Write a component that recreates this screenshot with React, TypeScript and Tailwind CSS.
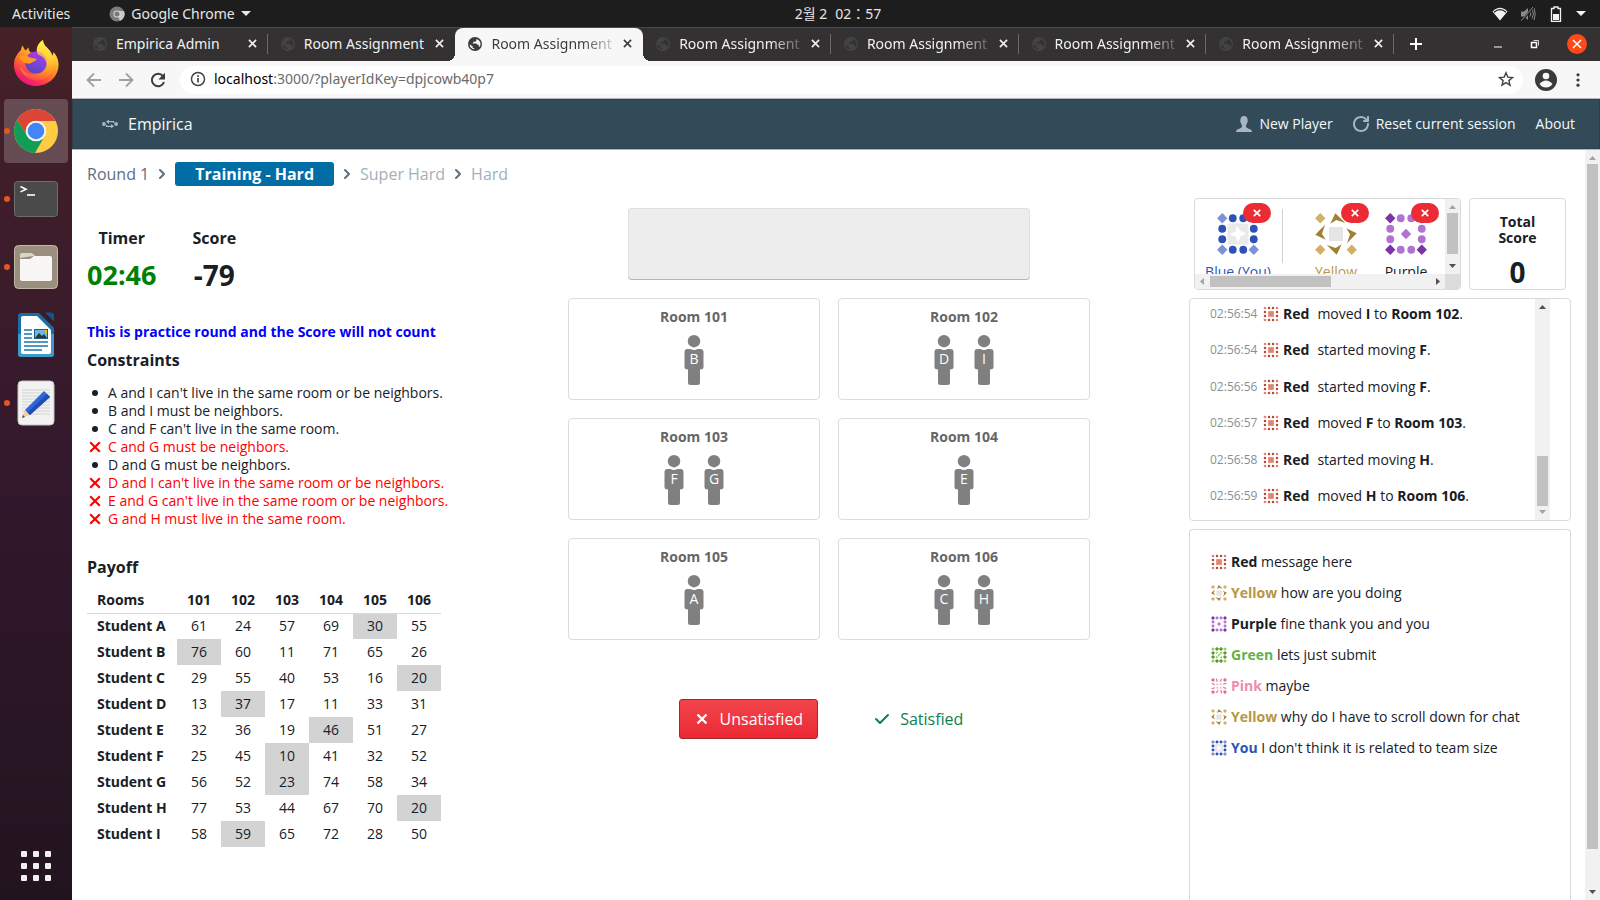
import type { ReactNode } from "react";

const UI = "font-['Noto_Sans','Noto_Sans_CJK_KR',sans-serif]";

/* ---------- small icons ---------- */

function Cross({ className = "", width = 2 }: { className?: string; width?: number }) {
  return (
    <svg viewBox="0 0 10 10" className={className} fill="none" stroke="currentColor" strokeWidth={width} aria-hidden="true">
      <path d="M1 1L9 9M9 1L1 9" />
    </svg>
  );
}

function Chevron() {
  return (
    <svg viewBox="0 0 16 16" className="size-4 shrink-0 text-[#5c7080]" fill="none" stroke="currentColor" strokeWidth="2" strokeLinecap="round" strokeLinejoin="round" aria-hidden="true">
      <path d="M6 4l4 4-4 4" />
    </svg>
  );
}

function Globe({ className = "" }: { className?: string }) {
  return (
    <svg viewBox="0 0 16 16" className={className} aria-hidden="true">
      <path
        fill="currentColor"
        fillRule="evenodd"
        d="M8 1a7 7 0 1 0 0 14A7 7 0 0 0 8 1zM2.6 8.3l3.1 2.2v1.6h1.5v1.2A5.4 5.4 0 0 1 2.6 8.3zM9.5 3v1.2L8.300 5.700H6.500L5.700 7.500h3.700l1.100 1.300h1.300v1.600l1 .4A5.400 5.400 0 0 0 9.500 3z"
      />
    </svg>
  );
}

function ArrowHead({ dir, tone = "dark" }: { dir: "up" | "down" | "left" | "right"; tone?: "dark" | "light" }) {
  const d = {
    up: "M0 4L3.500 0L7 4z",
    down: "M0 0h7L3.500 4z",
    left: "M4 0v7L0 3.500z",
    right: "M0 0v7L4 3.500z",
  }[dir];
  const horizontal = dir === "left" || dir === "right";
  return (
    <svg
      viewBox={horizontal ? "0 0 4 7" : "0 0 7 4"}
      className={horizontal ? "h-[7px] w-1" : "h-1 w-[7px]"}
      fill={tone === "dark" ? "#505050" : "#a3a3a3"}
      aria-hidden="true"
    >
      <path d={d} />
    </svg>
  );
}

/* ---------- identicons (4 x 4 cells in a 42-unit box) ---------- */

type Team = "Blue" | "Yellow" | "Purple" | "Red" | "Green" | "Pink";

const CORNERS = [[5.25, 5.25], [36.75, 5.25], [5.25, 36.75], [36.75, 36.75]];
const SIDES = [
  [15.75, 5.25], [26.25, 5.25], [15.75, 36.75], [26.25, 36.75],
  [5.25, 15.75], [5.25, 26.25], [36.75, 15.75], [36.75, 26.25],
];

const Diamond = ({ x, y, r, fill }: { x: number; y: number; r: number; fill: string }) => (
  <path d={`M${x} ${y - r}L${x + r} ${y}L${x} ${y + r}L${x - r} ${y}z`} fill={fill} />
);

function Identicon({ team, className = "" }: { team: Team; className?: string }) {
  return (
    <svg viewBox="0 0 42 42" className={className} role="img" aria-label={team}>
      {team === "Blue" && (
        <>
          {CORNERS.map(([x, y]) => <Diamond key={`${x}${y}`} x={x} y={y} r={5.2} fill="#7c93d6" />)}
          {SIDES.map(([x, y]) => <circle key={`${x}${y}`} cx={x} cy={y} r="3.900" fill="#2c52b8" />)}
          <rect x="10.500" y="10.500" width="21" height="21" fill="#eaeaea" />
          <path d="M19.500 12.500L23.500 18L29.500 20.500L23.500 23.500L21 29.500L18.500 23.500L12.500 21.500L18.500 18.500z" fill="#fff" />
        </>
      )}
      {team === "Yellow" && (
        <>
          {CORNERS.map(([x, y]) => <Diamond key={`${x}${y}`} x={x} y={y} r={5.2} fill="#d3b066" />)}
          {[0, 90, 180, 270].map((a) => (
            <path key={a} d="M31.300 15.300L41.700 20.300L32 30.300L35 21.300z" fill="#a17f33" transform={`rotate(${a} 21 21)`} />
          ))}
          <rect x="14" y="14" width="14" height="14" fill="#e5e5e5" />
        </>
      )}
      {team === "Purple" && (
        <>
          {CORNERS.map(([x, y]) => <Diamond key={`${x}${y}`} x={x} y={y} r={5.2} fill="#7a34a6" />)}
          {SIDES.map(([x, y]) => <circle key={`${x}${y}`} cx={x} cy={y} r="3.900" fill="#b073d4" />)}
          <Diamond x={21} y={21} r={5.2} fill="#b073d4" />
        </>
      )}
      {team === "Red" && (
        <>
          {CORNERS.map(([x, y]) => <circle key={`${x}${y}`} cx={x} cy={y} r="3.600" fill="#df8574" />)}
          {SIDES.map(([x, y]) => <circle key={`${x}${y}`} cx={x} cy={y} r="3.200" fill="#b84a35" />)}
          <rect x="13.500" y="13.500" width="15" height="15" fill="#df8574" />
        </>
      )}
      {team === "Green" && (
        <>
          {CORNERS.map(([x, y]) => <circle key={`${x}${y}`} cx={x} cy={y} r="4" fill="#93cf62" />)}
          {SIDES.map(([x, y]) => <Diamond key={`${x}${y}`} x={x} y={y} r={5.500} fill="#5d9a31" />)}
          <path d="M12 12l7 2-5 5zM30 12l-2 7-5-5zM12 30l2-7 5 5zM30 30l-7-2 5-5z" fill="#93cf62" />
          <path d="M17 25l8-8" stroke="#93cf62" strokeWidth="3" />
        </>
      )}
      {team === "Pink" && (
        <>
          {CORNERS.map(([x, y]) => <Diamond key={`${x}${y}`} x={x} y={y} r={5.500} fill="#df6f99" />)}
          {[0, 90, 180, 270].map((a) => (
            <path key={a} d="M13 1l3 1 2 8-4-1zM30 1l-5 3-3 7 4-2z" fill="#df6f99" transform={`rotate(${a} 21 21)`} />
          ))}
          <path d="M14 14h5v5h-5zM23 14h5v5h-5zM14 23h5v5h-5zM23 23h5v5h-5z" fill="#f3b9cd" />
        </>
      )}
    </svg>
  );
}

/* ---------- desktop: top bar and dock ---------- */

function TopBar() {
  return (
    <header className={`grid h-[27px] shrink-0 grid-cols-[1fr_auto_1fr] items-center bg-[#1d1d1d] text-sm leading-5 text-[#e6e6e6] ${UI}`}>
      <div className="flex items-center">
        <button className="pl-3">Activities</button>
        <button className="ml-[39px] flex items-center">
          <svg viewBox="0 0 16 16" className="size-4" aria-hidden="true">
            <circle cx="8" cy="8" r="7.500" fill="#7d7d7d" />
            <path d="M8 8L11 15A7.500 7.500 0 0 0 15 5H8z" fill="#c9c9c9" />
            <circle cx="8" cy="8" r="3.500" fill="#d8d8d8" />
            <circle cx="8" cy="8" r="2.500" fill="#777" />
          </svg>
          <span className="ml-1.5">Google Chrome</span>
          <svg viewBox="0 0 10 5" className="ml-1.5 h-[5px] w-2.5 fill-current" aria-hidden="true"><path d="M0 0h10L5 5z" /></svg>
        </button>
      </div>
      <button className="pl-[76px]">
        <span>2월 2</span>
        <span className="ml-2">02：57</span>
      </button>
      <div className="flex items-center justify-end gap-3 pr-[14px]">
        <svg viewBox="0 0 16 14" className="h-3.5 w-4" aria-label="Wi-Fi">
          <path d="M.5 4.500Q8-3 15.500 4.500L8 13.500z" fill="#f2f2f2" />
          <path d="M2 5.200Q8 .2 14 5.200" fill="none" stroke="#1d1d1d" strokeWidth="1.200" />
        </svg>
        <svg viewBox="0 0 16 16" className="size-4" fill="none" stroke="#8a8a8a" aria-label="Muted">
          <path d="M1 5.500h3l4-3.500v12l-4-3.500H1z" fill="#8a8a8a" stroke="none" />
          <path d="M10 5.500q1.500 2.500 0 5M12 3.500q3 4.500 0 9M14 2q2.500 6 0 12" />
          <path d="M2 14.500L13.500 1" stroke="#1d1d1d" strokeWidth="2" />
          <path d="M1.500 14.500L13 1" />
        </svg>
        <svg viewBox="0 0 16 16" className="size-4" aria-label="Battery">
          <path d="M6 1h4v1.500h2.500v13h-9v-13H6z" fill="none" stroke="#f2f2f2" strokeWidth="1.300" />
          <rect x="5" y="8" width="6" height="6" fill="#f2f2f2" />
        </svg>
        <svg viewBox="0 0 10 5" className="h-[5px] w-2.5 fill-[#f2f2f2]" aria-hidden="true"><path d="M0 0h10L5 5z" /></svg>
      </div>
    </header>
  );
}

function Firefox() {
  return (
    <svg viewBox="0 0 46 48" className="h-12 w-[46px]" aria-hidden="true">
      <defs>
        <linearGradient id="ffBody" x1="0.800" y1="0.100" x2="0.300" y2="1">
          <stop offset="0" stopColor="#fff44f" />
          <stop offset="0.300" stopColor="#ffb52b" />
          <stop offset="0.600" stopColor="#ff6a2c" />
          <stop offset="0.850" stopColor="#f8265f" />
          <stop offset="1" stopColor="#e31587" />
        </linearGradient>
        <linearGradient id="ffTail" x1="0.500" y1="0" x2="0.600" y2="1">
          <stop offset="0" stopColor="#fff34f" />
          <stop offset="0.500" stopColor="#ffd43a" />
          <stop offset="1" stopColor="#ff9a28" stopOpacity="0.300" />
        </linearGradient>
        <linearGradient id="ffGlobe" x1="0.700" y1="0" x2="0.300" y2="1">
          <stop offset="0" stopColor="#b833e1" />
          <stop offset="0.500" stopColor="#7a45e0" />
          <stop offset="1" stopColor="#5b44b5" />
        </linearGradient>
      </defs>
      <path d="M1 26C1 19 4 15 8 11C8 9 9 7 10 6.500C10.300 9 11.500 10.500 13 11.500C13.700 10 14.500 9 15.500 8.500C15.500 11 16.500 12.500 18 13.500H24C23 8 26 3 30 1C30 6 34 8 37 12C38.500 14 39 15.500 39 17C40 16 40.500 14.500 40.500 13C44 17 46 22 45.500 27C45 38 35 47 23 47S1 38 1 26z" fill="url(#ffBody)" />
      <circle cx="23" cy="23.500" r="11" fill="url(#ffGlobe)" />
      <path fillRule="evenodd" d="M30 1C30 6 34 8 37 12C41 17 42.500 24 39.500 31C36 39 28 43 20 41C13 39 8 34 7 27C10 33 16 36 22 35.500C30 35 34.500 29 33 23C32 19.500 29 17 25 15.500C22 11 25 4 30 1z" fill="url(#ffTail)" opacity="0.700" />
      <path d="M6 18C10 15.500 14 16.500 17 18.500C19 19.300 22 19 23.500 20C23 22.500 19 23 17.500 24.500C13 25 8.500 23 6 18z" fill="#ff9a1f" />
    </svg>
  );
}

function ChromeLogo() {
  return (
    <svg viewBox="0 0 46 46" className="size-[46px]" aria-hidden="true">
      <circle cx="23" cy="23" r="22" fill="#fc4" />
      <path d="M23 13H42.600A22 22 0 0 0 4 12L14.300 28A10 10 0 0 1 23 13z" fill="#db4437" />
      <path d="M4 12A22 22 0 0 0 22 45L31.700 28A10 10 0 0 1 14.300 28z" fill="#0f9d58" />
      <circle cx="23" cy="23" r="10.300" fill="#f4f4f4" />
      <circle cx="23" cy="23" r="8.300" fill="#4285f4" />
    </svg>
  );
}

function DockItem({ label, running, active, children }: { label: string; running?: boolean; active?: boolean; children: ReactNode }) {
  return (
    <li className="relative flex w-full justify-center">
      {running && <span className="absolute top-[29px] left-1 size-1.5 rounded-full bg-[#e95420]" />}
      <button aria-label={label} className={active ? "flex size-16 items-center justify-center rounded bg-white/20" : "flex size-16 items-center justify-center rounded"}>
        {children}
      </button>
    </li>
  );
}

function Dock() {
  return (
    <nav aria-label="Dock" className="flex w-[72px] shrink-0 flex-col justify-between bg-linear-to-b from-[#462127] via-[#33182c] to-[#22141f] pt-1 pb-4">
      <ul className="flex flex-col gap-1">
        <DockItem label="Firefox"><Firefox /></DockItem>
        <DockItem label="Google Chrome" running active><ChromeLogo /></DockItem>
        <DockItem label="Terminal" running>
          <svg viewBox="0 0 46 46" className="size-[46px]" aria-hidden="true">
            <rect x="1.500" y="5.500" width="43" height="35" rx="3" fill="#4a4a4a" stroke="#6d6d6d" />
            <path d="M7.500 10.500l5.500 2.700-5.500 2.700" fill="none" stroke="#fff" strokeWidth="1.600" />
            <path d="M14 19h8" stroke="#fff" strokeWidth="1.600" />
          </svg>
        </DockItem>
        <DockItem label="Files" running>
          <svg viewBox="0 0 46 46" className="size-[46px]" aria-hidden="true">
            <rect x="1.500" y="1.500" width="43" height="43" rx="4" fill="#9a8f7e" stroke="#c0b8a8" />
            <path d="M7 14v-3q0-2 2-2h9q2 0 4 3h-2z" fill="#d9d5c9" />
            <path d="M7 15h10l4-3h16q2 0 2 2v21q0 2-2 2H9q-2 0-2-2z" fill="#f8f7f5" />
          </svg>
        </DockItem>
        <DockItem label="LibreOffice Writer">
          <svg viewBox="0 0 46 46" className="size-[46px]" aria-hidden="true">
            <path d="M8 1h18l15 15v26q0 3-3 3H8q-3 0-3-3V4q0-3 3-3z" fill="#1a6ea5" />
            <path d="M5 22h36v20q0 3-3 3H8q-3 0-3-3z" fill="#3d9bc9" />
            <path d="M32 .5h6q3 0 3 3v6z" fill="#11578b" />
            <path d="M10 4h14l14 14v22q0 2-2 2H10q-2 0-2-2V6q0-2 2-2z" fill="#fff" />
            <path d="M11 18h8M11 22h8M11 26h8M11 30h24M11 34h24M11 38h18" stroke="#1c76ad" strokeWidth="1.700" />
            <rect x="21.500" y="17.500" width="13" height="9" fill="#6cb8e0" stroke="#1a5f8e" />
            <path d="M22 26l4-5 3 3 2-2 3 4z" fill="#333" />
            <path d="M31 18h3v4z" fill="#f4c20d" />
          </svg>
        </DockItem>
        <DockItem label="Text Editor" running>
          <svg viewBox="0 0 46 46" className="size-[46px]" aria-hidden="true">
            <rect x="5" y="1" width="36" height="44" rx="4" fill="#f2f2f2" stroke="#c4c4c4" />
            <path d="M9 10h28M9 13h28M9 16h28M9 19h28M9 22h28M9 25h28M9 28h28M9 31h28M9 34h28" stroke="#d3d3d3" strokeWidth="1" />
            <path d="M9 38l3-8 5 5z" fill="#f5cfa6" />
            <path d="M9 38l1-3 2 2z" fill="#444" />
            <path d="M12 30L31 11l6 6-20 18z" fill="#2f66dd" />
            <path d="M14.500 32.500L34 14l3 3-20 18z" fill="#1f4fb5" />
          </svg>
        </DockItem>
      </ul>
      <button aria-label="Show applications" className="mx-auto grid size-9 grid-cols-3 place-items-center">
        {Array.from({ length: 9 }, (_, i) => <span key={i} className="size-1.5 rounded-[1px] bg-[#f1efee]" />)}
      </button>
    </nav>
  );
}

/* ---------- browser chrome ---------- */

const TABS = ["Empirica Admin", ...Array.from({ length: 6 }, () => "Room Assignment")];

function TabStrip() {
  return (
    <div className={`flex h-[34px] border-t border-[#484848] bg-[#333132] pl-2 text-sm leading-5 ${UI}`}>
      <div role="tablist" className="flex min-w-0 flex-1">
        {TABS.map((title, i) => {
          const active = i === 2;
          const divider = i !== 1 && i !== 2;
          return (
            <div
              key={i}
              className={
                active
                  ? "relative flex min-w-0 flex-1 items-center rounded-t-lg bg-[#f7f7f7] pb-0.5 pl-3 text-[#3c3c3c] before:absolute before:bottom-0 before:-left-2 before:size-2 before:bg-[radial-gradient(circle_at_0_0,transparent_8px,#f7f7f7_8px)] after:absolute after:-right-2 after:bottom-0 after:size-2 after:bg-[radial-gradient(circle_at_100%_0,transparent_8px,#f7f7f7_8px)]"
                  : "flex min-w-0 flex-1 items-center pb-0.5 pl-3 text-[#f1f1f1]"
              }
            >
              <Globe className={active ? "size-4 shrink-0" : "size-4 shrink-0 text-[#434343]"} />
              <button
                role="tab"
                aria-selected={active}
                className={
                  i < 2
                    ? "ml-2 min-w-0 flex-1 overflow-hidden text-left whitespace-nowrap"
                    : "ml-2 min-w-0 flex-1 overflow-hidden text-left whitespace-nowrap [mask-image:linear-gradient(to_right,black_70%,transparent)]"
                }
              >
                {title}
              </button>
              <button aria-label={`Close ${title}`} className="mr-2 p-0.5">
                <Cross className="size-[9px]" width={1.8} />
              </button>
              <span className={divider ? "h-5 w-px bg-[#6a6a6a]" : "h-5 w-px"} />
            </div>
          );
        })}
      </div>
      <div className="flex w-[206px] shrink-0 items-center pb-0.5 text-white">
        <button aria-label="New tab" className="ml-4">
          <svg viewBox="0 0 12 12" className="size-3" stroke="currentColor" strokeWidth="2"><path d="M6 0v12M0 6h12" /></svg>
        </button>
        <div className="ml-auto flex items-center gap-[27px] pr-[13px]">
          <button aria-label="Minimize">
            <svg viewBox="0 0 10 10" className="size-2.5"><path d="M1 8h8" stroke="currentColor" /></svg>
          </button>
          <button aria-label="Restore">
            <svg viewBox="0 0 10 10" className="size-2.5" fill="none" stroke="currentColor"><path d="M1.500 3.500h5v5h-5z" strokeWidth="1.500" /><path d="M3.500 1.500h5v5" strokeWidth="1" opacity="0.800" /></svg>
          </button>
          <button aria-label="Close window" className="flex size-5 items-center justify-center rounded-full bg-[#fc4a1a]">
            <Cross className="size-2.5" width={1.5} />
          </button>
        </div>
      </div>
    </div>
  );
}

function Toolbar() {
  return (
    <div className={`flex h-[38px] items-center border-b border-[#b8b8b8] bg-[#f7f7f7] px-[14px] text-sm leading-5 ${UI}`}>
      <div className="flex gap-4">
        <button aria-label="Back" className="text-[#a0a0a0]">
          <svg viewBox="0 0 16 16" className="size-4" fill="none" stroke="currentColor" strokeWidth="1.800"><path d="M15 8H2M8 1.500L1.500 8L8 14.500" /></svg>
        </button>
        <button aria-label="Forward" className="text-[#a0a0a0]">
          <svg viewBox="0 0 16 16" className="size-4" fill="none" stroke="currentColor" strokeWidth="1.800"><path d="M1 8h13M8 1.500L14.500 8L8 14.500" /></svg>
        </button>
        <button aria-label="Reload" className="text-[#3a3a3a]">
          <svg viewBox="0 0 16 16" className="size-4" fill="none" stroke="currentColor" strokeWidth="2"><path d="M13 4.200A6.200 6.200 0 1 0 14 10" /><path d="M15 .8v6.700H8.300z" fill="currentColor" stroke="none" /></svg>
        </button>
      </div>
      <div className="ml-[14px] flex h-7 flex-1 items-center rounded-full bg-white pr-[9px] pb-px pl-2.5">
        <svg viewBox="0 0 16 16" className="size-4" fill="none" stroke="#444" strokeWidth="1.500" aria-hidden="true"><circle cx="8" cy="8" r="6.500" /><path d="M8 7v4.500M8 4.200v1.700" strokeWidth="1.700" /></svg>
        <label htmlFor="address" className="pl-2 text-black">localhost</label>
        <input id="address" readOnly value=":3000/?playerIdKey=dpjcowb40p7" className="min-w-0 flex-1 bg-transparent text-[#6b6b6b] outline-none" />
        <button aria-label="Bookmark this page">
          <svg viewBox="0 0 16 16" className="size-4" fill="none" stroke="#444" strokeWidth="1.400"><path d="M8 1.800l1.800 4.300 4.700.4-3.600 3.100 1.100 4.600L8 11.700l-4 2.500 1.100-4.600-3.600-3.100 4.700-.4z" /></svg>
        </button>
      </div>
      <button aria-label="Profile" className="ml-3">
        <svg viewBox="0 0 22 22" className="size-[22px]"><circle cx="11" cy="11" r="11" fill="#3a3a3a" /><circle cx="11" cy="7" r="3.300" fill="#f7f7f7" /><path d="M4.500 15q3-3.500 6.500-3.500t6.500 3.500q-2.500 3.500-6.500 3.500T4.500 15z" fill="#f7f7f7" /></svg>
      </button>
      <button aria-label="Menu" className="ml-[13px]">
        <svg viewBox="0 0 16 16" className="size-4" fill="#3a3a3a"><circle cx="8" cy="2.800" r="1.600" /><circle cx="8" cy="8" r="1.600" /><circle cx="8" cy="13.200" r="1.600" /></svg>
      </button>
    </div>
  );
}

/* ---------- page ---------- */

function Navbar() {
  return (
    <nav className="flex h-[50px] items-center bg-[#334b59] pr-[25px] pl-[30px] text-[#f5f8fa] shadow-[inset_0_0_0_1px_rgba(16,22,26,0.2)]">
      <svg viewBox="0 0 16 16" className="size-4 text-[#a7b6c2]" fill="currentColor" aria-hidden="true">
        <circle cx="1.900" cy="8" r="1.900" /><circle cx="14.100" cy="8" r="1.900" />
        <path d="M6 5.700h5.500v1.300M10 10.300H4.500v-1.300" fill="none" stroke="currentColor" strokeWidth="1.200" />
        <path d="M7 3.400v4.600L4 5.700zM9 8v4.600L12 10.300z" />
      </svg>
      <a href="#home" className="ml-2.5 text-base leading-6">Empirica</a>
      <div className="ml-auto flex items-center gap-5 text-sm leading-5">
        <a href="#new-player" className="flex items-center gap-[7px]">
          <svg viewBox="0 0 16 16" className="size-4 text-[#a7b6c2]" fill="currentColor" aria-hidden="true">
            <path d="M8 0C5.600 0 4.300 1.700 4.400 4C4.400 4.600 4 4.900 4.200 5.600C4.400 6.400 4.800 6.500 4.900 7.100C5.200 8.300 6 9.200 6 9.800C6.100 11.200 5.400 11.800 3.300 12.700C1.500 13.400 0 13.900 0 16H16C16 13.900 14.500 13.400 12.700 12.700C10.600 11.800 9.900 11.200 10 9.800C10 9.200 10.800 8.300 11.100 7.100C11.200 6.500 11.600 6.400 11.800 5.600C12 4.900 11.600 4.600 11.600 4C11.700 1.700 10.400 0 8 0z" />
          </svg>
          New Player
        </a>
        <a href="#reset" className="flex items-center gap-[7px]">
          <svg viewBox="0 0 16 16" className="size-4 text-[#a7b6c2]" fill="currentColor" aria-hidden="true">
            <path d="M10 5c0 .55.45 1 1 1h4c.55 0 1-.45 1-1V1c0-.55-.45-1-1-1s-1 .45-1 1v1.740A7.950 7.950 0 0 0 8 0C3.580 0 0 3.580 0 8s3.580 8 8 8 8-3.580 8-8c0-.55-.45-1-1-1s-1 .45-1 1c0 3.310-2.690 6-6 6s-6-2.690-6-6 2.690-6 6-6c1.770 0 3.360.78 4.460 2H11c-.55 0-1 .45-1 1z" />
          </svg>
          Reset current session
        </a>
        <a href="#about">About</a>
      </div>
    </nav>
  );
}

const CONSTRAINTS: [string, boolean][] = [
  ["A and I can't live in the same room or be neighbors.", true],
  ["B and I must be neighbors.", true],
  ["C and F can't live in the same room.", true],
  ["C and G must be neighbors.", false],
  ["D and G must be neighbors.", true],
  ["D and I can't live in the same room or be neighbors.", false],
  ["E and G can't live in the same room or be neighbors.", false],
  ["G and H must live in the same room.", false],
];

const ROOMS = [101, 102, 103, 104, 105, 106];

const PAYOFF: { student: string; values: number[]; room: number }[] = [
  { student: "A", values: [61, 24, 57, 69, 30, 55], room: 105 },
  { student: "B", values: [76, 60, 11, 71, 65, 26], room: 101 },
  { student: "C", values: [29, 55, 40, 53, 16, 20], room: 106 },
  { student: "D", values: [13, 37, 17, 11, 33, 31], room: 102 },
  { student: "E", values: [32, 36, 19, 46, 51, 27], room: 104 },
  { student: "F", values: [25, 45, 10, 41, 32, 52], room: 103 },
  { student: "G", values: [56, 52, 23, 74, 58, 34], room: 103 },
  { student: "H", values: [77, 53, 44, 67, 70, 20], room: 106 },
  { student: "I", values: [58, 59, 65, 72, 28, 50], room: 102 },
];

function Info() {
  return (
    <section className="pt-7">
      <div className="flex gap-9 text-center">
        <div>
          <h2 className="text-base leading-6 font-bold">Timer</h2>
          <p className="mt-[7px] text-[27px] leading-9 font-bold text-[#008000]">02:46</p>
        </div>
        <div>
          <h2 className="text-base leading-6 font-bold">Score</h2>
          <p className="mt-[7px] text-[28px] leading-9 font-bold">-79</p>
        </div>
      </div>
      <p className="mt-[29px] text-sm leading-5 font-bold text-[#0000ff]">This is practice round and the Score will not count</p>
      <h2 className="mt-1.5 text-base leading-6 font-bold">Constraints</h2>
      <ul className="mt-3 text-sm leading-[18px]">
        {CONSTRAINTS.map(([text, ok]) => (
          <li key={text} className={ok ? "flex items-center gap-[5px]" : "flex items-center gap-[5px] text-[#ff0000]"}>
            <span className="flex size-4 items-center justify-center">
              {ok ? <span className="size-1.5 rounded-full bg-[#182026]" /> : <Cross className="size-3" width={1.8} />}
            </span>
            {text}
          </li>
        ))}
      </ul>
      <h2 className="mt-[27px] text-base leading-6 font-bold">Payoff</h2>
      <table className="mt-2 border-collapse text-center text-sm leading-[18px]">
        <thead>
          <tr className="h-[26px]">
            <th className="w-[90px] pl-2.5 text-left">Rooms</th>
            {ROOMS.map((room) => <th key={room} className="w-11">{room}</th>)}
          </tr>
        </thead>
        <tbody className="border-t border-[#d6d8da]">
          {PAYOFF.map(({ student, values, room }) => (
            <tr key={student} className="h-[26px]">
              <th className="pl-2.5 text-left whitespace-nowrap">Student {student}</th>
              {values.map((value, i) => (
                <td key={i} className={ROOMS[i] === room ? "bg-[#d3d3d3]" : ""}>{value}</td>
              ))}
            </tr>
          ))}
        </tbody>
      </table>
    </section>
  );
}

function Person({ name }: { name: string }) {
  return (
    <div className="relative h-[50px] w-5">
      <svg viewBox="0 0 20 50" className="h-full w-full" fill="#808080" aria-hidden="true">
        <circle cx="10" cy="6.200" r="6.200" />
        <path d="M3.500 14H6.500Q10 16 13.500 14H16.500Q19.500 14 19.500 17V32Q19.500 34.500 16 34.500V47.500Q16 50 13.500 50H6.500Q4 50 4 47.500V34.500Q.5 34.500.5 32V17Q.5 14 3.500 14z" />
      </svg>
      <span className="absolute inset-x-0 top-3.5 text-center text-sm leading-5 text-white">{name}</span>
    </div>
  );
}

const PLACEMENT: [number, string[]][] = [
  [101, ["B"]], [102, ["D", "I"]], [103, ["F", "G"]], [104, ["E"]], [105, ["A"]], [106, ["C", "H"]],
];

function Board() {
  return (
    <section className="flex min-w-0 flex-col items-center pt-2.5">
      <div className="h-[72px] w-full max-w-[402px] rounded bg-[#ededed] shadow-[inset_0_0_0_1px_rgba(16,22,26,0.06),inset_0_-1px_0_rgba(16,22,26,0.2)]" />
      <div className="mt-[18px] grid w-full max-w-[522px] grid-cols-2 gap-[18px]">
        {PLACEMENT.map(([room, people]) => (
          <div key={room} className="h-[102px] rounded border border-[#dbdcdd] pt-2">
            <h3 className="text-center text-sm leading-5 font-bold text-[#666]">Room {room}</h3>
            <div className="mt-2 flex justify-center gap-5">
              {people.map((p) => <Person key={p} name={p} />)}
            </div>
          </div>
        ))}
      </div>
      <div className="mt-[59px] flex gap-[42px] pr-0.5 text-base">
        <button className="flex h-10 items-center gap-2.5 rounded-[3px] border border-[#9c2a31] bg-linear-to-b from-[#f2454b] to-[#ec2633] px-3.5 text-white">
          <svg viewBox="0 0 16 16" className="size-4" fill="none" stroke="currentColor" strokeWidth="2.400" aria-hidden="true"><path d="M3.500 3.500l9 9M12.500 3.500l-9 9" /></svg>
          Unsatisfied
        </button>
        <button className="flex h-10 items-center gap-2.5 px-3.5 text-[#0d8050]">
          <svg viewBox="0 0 16 16" className="size-4" fill="currentColor" aria-hidden="true">
            <path d="M14 3c-.28 0-.53.11-.71.29L6 10.590l-3.290-3.300a1.003 1.003 0 0 0-1.420 1.420l4 4c.18.18.43.29.71.29s.53-.11.71-.29l8-8A1.003 1.003 0 0 0 14 3z" />
          </svg>
          Satisfied
        </button>
      </div>
    </section>
  );
}

function Player({ team, label, color }: { team: Team; label: string; color: string }) {
  return (
    <div className="relative flex w-[70px] shrink-0 flex-col items-center">
      <Identicon team={team} className="size-[42px] shrink-0" />
      <button aria-label={`Remove ${team}`} className="absolute -top-2.5 left-10 flex h-5 w-7 items-center justify-center rounded-full bg-[#ed2b35] text-white">
        <Cross className="size-2" width={2.2} />
      </button>
      <span className={`mt-[7px] shrink-0 text-sm leading-5 whitespace-nowrap ${color}`}>{label}</span>
    </div>
  );
}

function Players() {
  return (
    <div className="flex gap-2 px-[5px]">
      <div className="grid h-[92px] min-w-0 flex-1 grid-cols-[1fr_15px] grid-rows-[75px_15px] overflow-hidden rounded border border-[#d8d9da]">
        <div className="flex min-w-0 items-start overflow-hidden pt-[14px] pl-2">
          <Player team="Blue" label="Blue (You)" color="text-[#2c52b8]" />
          <div className="-mt-1 ml-[9px] h-[54px] w-px shrink-0 bg-[#cfd1d3]" />
          <div className="flex pl-[18px]">
            <Player team="Yellow" label="Yellow" color="text-[#b8963f]" />
            <Player team="Purple" label="Purple" color="text-[#182026]" />
          </div>
        </div>
        <div className="flex flex-col items-center justify-between bg-[#f1f1f1] py-1.5">
          <ArrowHead dir="up" tone="light" />
          <span className="mt-1 h-[41px] w-[11px] bg-[#c1c1c1]" />
          <span className="flex flex-1 items-end"><ArrowHead dir="down" /></span>
        </div>
        <div className="flex items-center justify-between bg-[#f1f1f1] px-[5px]">
          <ArrowHead dir="left" tone="light" />
          <span className="ml-1.5 h-[11px] w-[121px] bg-[#c1c1c1]" />
          <span className="flex flex-1 justify-end"><ArrowHead dir="right" /></span>
        </div>
        <div className="bg-[#dcdcdc]" />
      </div>
      <div className="flex h-[92px] w-[97px] flex-col items-center rounded border border-[#d8d9da] pt-[15px]">
        <h2 className="text-center text-sm leading-4 font-bold">Total<br />Score</h2>
        <p className="mt-2 text-[28px] leading-9 font-bold">0</p>
      </div>
    </div>
  );
}

const LOG: [string, string, string?][] = [
  ["02:56:54", "I", "102"],
  ["02:56:54", "F"],
  ["02:56:56", "F"],
  ["02:56:57", "F", "103"],
  ["02:56:58", "H"],
  ["02:56:59", "H", "106"],
];

function EventLog() {
  return (
    <div className="mt-2 flex h-[223px] rounded border border-[#d8d9da]">
      <ul className="flex flex-1 flex-col justify-between pt-[5px] pb-[14px] pl-5 text-sm leading-5">
        {LOG.map(([time, person, room], i) => (
          <li key={i} className="flex h-5 items-center">
            <time className="w-[53px] text-xs leading-5 text-[#8a8f94]">{time}</time>
            <Identicon team="Red" className="size-4" />
            <b className="ml-1">Red</b>
            <span className="ml-2">
              {room ? <>moved <b>{person}</b> to <b>Room {room}</b>.</> : <>started moving <b>{person}</b>.</>}
            </span>
          </li>
        ))}
      </ul>
      <div className="mr-5 flex w-[15px] flex-col items-center bg-[#f1f1f1] py-1.5">
        <ArrowHead dir="up" />
        <span className="mt-auto mb-1 h-[50px] w-[11px] bg-[#c1c1c1]" />
        <ArrowHead dir="down" tone="light" />
      </div>
    </div>
  );
}

const CHAT: { team: Team; name: string; color: string; text: string }[] = [
  { team: "Red", name: "Red", color: "text-[#182026]", text: "message here" },
  { team: "Yellow", name: "Yellow", color: "text-[#b8963f]", text: "how are you doing" },
  { team: "Purple", name: "Purple", color: "text-[#182026]", text: "fine thank you and you" },
  { team: "Green", name: "Green", color: "text-[#66b04a]", text: "lets just submit" },
  { team: "Pink", name: "Pink", color: "text-[#f08bb0]", text: "maybe" },
  { team: "Yellow", name: "Yellow", color: "text-[#b8963f]", text: "why do I have to scroll down for chat" },
  { team: "Blue", name: "You", color: "text-[#2c52b8]", text: "I don't think it is related to team size" },
];

function Chat() {
  return (
    <div className="mt-2 flex-1 rounded-t border border-b-0 border-[#d8d9da] pt-[22px] pl-[21px]">
      <ul className="flex flex-col gap-[11px] text-sm leading-5">
        {CHAT.map(({ team, name, color, text }, i) => (
          <li key={i} className="flex items-center">
            <Identicon team={team} className="size-4" />
            <p className="ml-1"><b className={color}>{name}</b> {text}</p>
          </li>
        ))}
      </ul>
    </div>
  );
}

export default function App() {
  return (
    <div className="flex h-screen flex-col overflow-hidden bg-white font-['Open_Sans',sans-serif] text-[#182026]">
      <TopBar />
      <div className="flex min-h-0 flex-1">
        <Dock />
        <div className="flex min-w-0 flex-1 flex-col">
          <TabStrip />
          <Toolbar />
          <Navbar />
          <div className="flex min-h-0 flex-1 border-t border-[#b4b9bc]">
            <main className="flex min-w-0 flex-1 flex-col overflow-hidden pt-3 pr-[14px] pl-[15px]">
              <ol className="flex items-center text-base leading-6 text-[#5c7080]">
                <li>Round 1</li>
                <li className="px-[5px]"><Chevron /></li>
                <li className="rounded-[3px] bg-[#006ea5] px-5 font-bold text-white">Training - Hard</li>
                <li className="px-[5px]"><Chevron /></li>
                <li className="text-[#a3b0ba]">Super Hard</li>
                <li className="px-[5px]"><Chevron /></li>
                <li className="text-[#a3b0ba]">Hard</li>
              </ol>
              <div className="grid min-h-0 flex-1 grid-cols-[382px_1fr_382px] pt-3">
                <Info />
                <Board />
                <aside className="flex min-h-0 flex-col"><Players /><EventLog /><Chat /></aside>
              </div>
            </main>
            <div className="flex w-[15px] flex-col items-center bg-[#f1f1f1] py-1.5">
              <ArrowHead dir="up" tone="light" />
              <span className="mt-1 mb-[41px] w-[11px] flex-1 bg-[#c1c1c1]" />
              <ArrowHead dir="down" />
            </div>
          </div>
        </div>
      </div>
    </div>
  );
}
